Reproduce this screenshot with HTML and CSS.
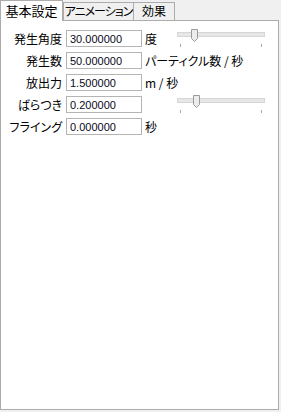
FILE: index.html
```html
<!DOCTYPE html>
<html>
  <head>
    <meta charset="utf-8" />
    <title>基本設定</title>
    <link rel="stylesheet" href="styles.css">
  </head>
  <body>
    <div class="tabs">
      <div class="tab active">基本設定</div>
      <div class="tab">アニメーション</div>
      <div class="tab">効果</div>
    </div>
    <div class="panel">
      <div class="form">
        <label>発生角度</label>
        <input type="text" value="30.000000"/>
        <span class="unit">度</span>
        <div class="slider">
          <svg width="88" height="20" viewBox="0 0 88 20">
            <rect x="0.5" y="3.5" width="87" height="4" fill="#e7e7e7" stroke="#d6d6d6"/>
            <path d="M14.5 0.5 H20.5 V9.5 L17.5 12.5 L14.5 9.5 Z" fill="#ececec" stroke="#9a9a9a"/>
            <line x1="3.5" y1="15" x2="3.5" y2="18" stroke="#a8a8a8"/>
            <line x1="84.5" y1="15" x2="84.5" y2="18" stroke="#a8a8a8"/>
          </svg>
        </div>

        <label>発生数</label>
        <input type="text" value="50.000000"/>
        <span class="unit wide">パーティクル数 / 秒</span>

        <label>放出力</label>
        <input type="text" value="1.500000"/>
        <span class="unit wide">m / 秒</span>

        <label>ばらつき</label>
        <input type="text" value="0.200000"/>
        <span class="unit"></span>
        <div class="slider">
          <svg width="88" height="20" viewBox="0 0 88 20">
            <rect x="0.5" y="3.5" width="87" height="4" fill="#e7e7e7" stroke="#d6d6d6"/>
            <path d="M16.5 0.5 H22.5 V9.5 L19.5 12.5 L16.5 9.5 Z" fill="#ececec" stroke="#9a9a9a"/>
            <line x1="3.5" y1="15" x2="3.5" y2="18" stroke="#a8a8a8"/>
            <line x1="84.5" y1="15" x2="84.5" y2="18" stroke="#a8a8a8"/>
          </svg>
        </div>

        <label>フライング</label>
        <input type="text" value="0.000000"/>
        <span class="unit wide">秒</span>
      </div>
    </div>
  </body>
</html>
```

FILE: styles.css
```css
html {
  background-color: #f0f0f0;
  color: black;
  font-family: "Noto Sans CJK JP", "Liberation Sans", sans-serif;
  font-size: 12px;
  font-feature-settings: "palt";
}

body {
  margin: 0;
  width: 281px;
  height: 412px;
}

.tabs {
  display: flex;
  align-items: flex-end;
  height: 20px;
  position: relative;
  z-index: 1;
}

.tab {
  box-sizing: border-box;
  height: 18px;
  border: 1px solid #acacac;
  border-bottom: none;
  background-color: #f0f0f0;
  line-height: 16px;
  text-align: center;
  white-space: nowrap;
  overflow: hidden;
}

.tab:nth-child(2) {
  width: 71px;
  letter-spacing: -1px;
}

.tab:nth-child(3) {
  width: 42px;
  margin-left: -1px;
}

.tab.active {
  width: 63px;
  height: 21px;
  margin-bottom: -1px;
  background-color: white;
  line-height: 19px;
  font-size: 13px;
}

.panel {
  box-sizing: border-box;
  width: 279px;
  height: 390px;
  border: 1px solid #acacac;
  background-color: white;
  padding-top: 9px;
}

.form {
  display: grid;
  grid-template-columns: 65px 79px 32px 88px;
  grid-auto-rows: 17px;
  row-gap: 5px;
}

.form label {
  text-align: right;
  padding-right: 4px;
  line-height: 17px;
  white-space: nowrap;
}

.form input {
  box-sizing: border-box;
  width: 76px;
  height: 17px;
  margin: 0;
  padding: 1px 0 0 3px;
  border: 1px solid #b4b4b4;
  font-family: "Liberation Sans", sans-serif;
  font-size: 11px;
  color: #0a0a20;
  outline: none;
}

.unit {
  line-height: 17px;
  white-space: nowrap;
}

.unit.wide {
  grid-column: 3 / 5;
}

.slider {
  height: 17px;
  overflow: visible;
}

.slider svg {
  display: block;
  margin-top: -1px;
}
```
